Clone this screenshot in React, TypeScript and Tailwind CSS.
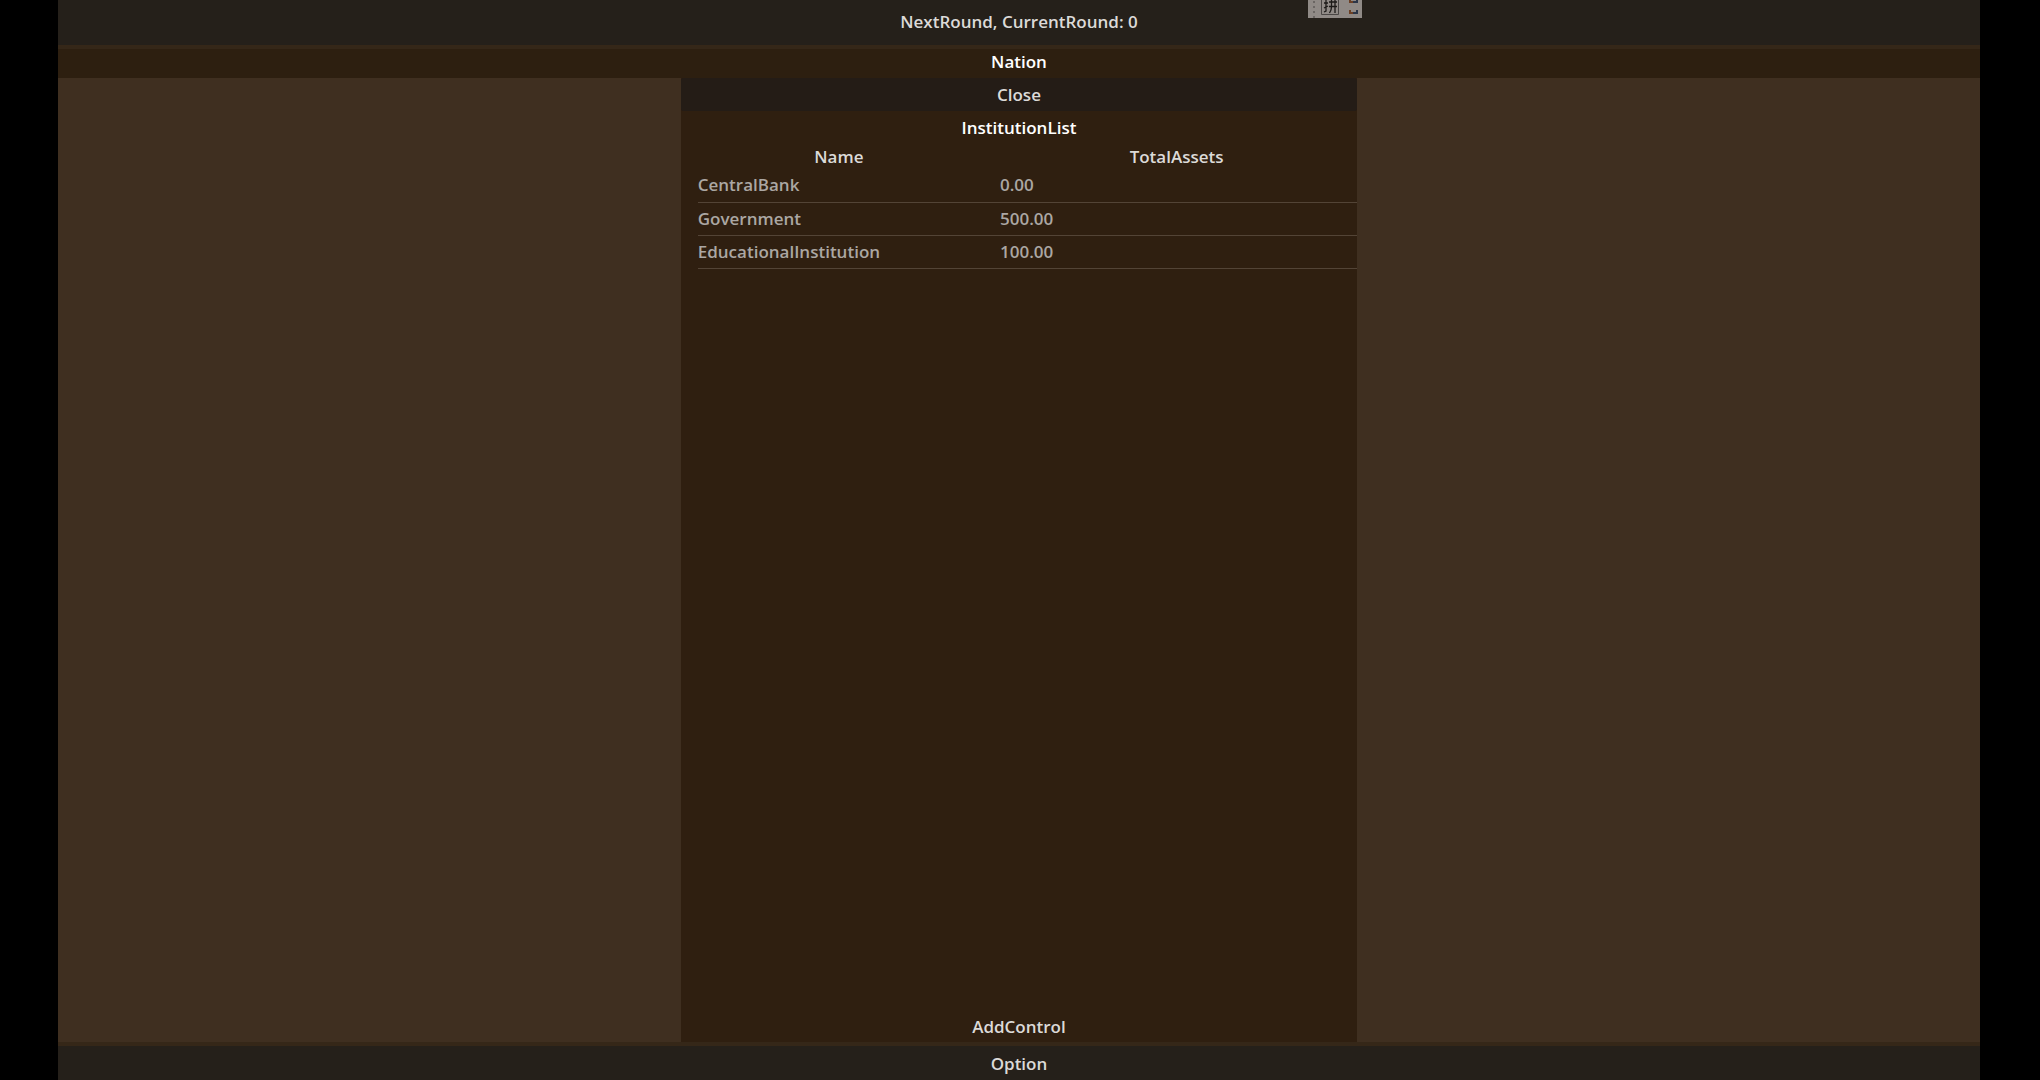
import { useState } from "react";

interface Institution {
  name: string;
  totalAssets: number;
}

const institutions: Institution[] = [
  { name: "CentralBank", totalAssets: 0 },
  { name: "Government", totalAssets: 500 },
  { name: "EducationalInstitution", totalAssets: 100 },
];

function ImeBar() {
  return (
    <div className="absolute top-0 left-[64.1%] w-[54px] h-[18px] bg-[#908a86]">
      <svg className="block" width="54" height="18" viewBox="0 0 54 18" fill="none">
        <path d="M6 1v17" stroke="#6b6663" strokeWidth="2" strokeDasharray="2 3" />
        <path d="M13.5 0v14.5h17V0" stroke="#4a4644" />
        <path
          d="M16 3h4M18 0v11l-2 1M16 8l4-2M21 2h8M21 6.500h8M23.500 0v7q0 3-2 6M27 0v13"
          stroke="#1d1a18"
          strokeWidth="1.300"
        />
        <path d="M42 0v2h3M42 10v3h3" stroke="#6b3f24" strokeWidth="2" />
        <path d="M45 2h4V0M45 13h4v-3" stroke="#2c3648" strokeWidth="2" />
      </svg>
    </div>
  );
}

export default function App() {
  const [round, setRound] = useState(0);
  const [open, setOpen] = useState(true);

  return (
    <div className="min-h-screen bg-black pl-[2.85%] pr-[2.95%] flex font-['Open_Sans',sans-serif] font-semibold text-[17px] leading-6 text-[#dcdad8]">
      <div className="flex-1 flex flex-col bg-[#3f2f20]">
        <button
          onClick={() => setRound(round + 1)}
          className="h-[45px] bg-[#25201a] pb-px"
        >
          NextRound, CurrentRound: {round}
        </button>
        <h1 className="h-[33px] border-t-4 border-[#352718] bg-[#2d1f10] text-center text-white pt-px">
          Nation
        </h1>

        <main className="flex-1 flex justify-center">
          {open && (
            <section className="w-[35.2%] flex flex-col bg-[#2f1f10]">
              <button onClick={() => setOpen(false)} className="h-[33px] rounded-xs bg-[#241c16]">
                Close
              </button>
              <h2 className="text-center text-white py-[5px]">InstitutionList</h2>
              <div className="pl-[17px]">
                <table className="w-full table-fixed border-collapse text-[#aba7a3]">
                  <thead className="text-[#dcdad8]">
                    <tr>
                      <th className="w-[42.8%] p-0 font-semibold">Name</th>
                      <th className="p-0 pl-4 font-semibold">TotalAssets</th>
                    </tr>
                  </thead>
                  <tbody>
                    {institutions.map((item) => (
                      <tr key={item.name} className="h-[33px] border-b border-[#534436]">
                        <td className="p-0">{item.name}</td>
                        <td className="p-0 pl-5">{item.totalAssets.toFixed(2)}</td>
                      </tr>
                    ))}
                  </tbody>
                </table>
              </div>
              <button className="mt-auto h-[30px]">AddControl</button>
            </section>
          )}
        </main>

        <button className="h-[38px] border-t-4 border-[#352718] bg-[#25201a] pt-px">Option</button>
      </div>
      <ImeBar />
    </div>
  );
}
